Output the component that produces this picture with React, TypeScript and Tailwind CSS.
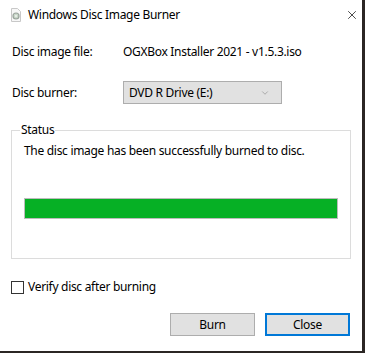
import { ChevronDown, X } from 'lucide-react';

function DiscIcon() {
  return (
    <svg width="14" height="14" viewBox="0 0 14 14" className="shrink-0">
      <path d="M2.5 0.5h6l3 3v10h-9z" fill="#f7f7f7" stroke="#c8c8c8" />
      <circle cx="7" cy="8" r="3.6" fill="#9aa39c" />
      <circle cx="7" cy="8" r="2.4" fill="#c9d8c9" />
      <circle cx="7" cy="8" r="0.9" fill="#f4f4f4" />
    </svg>
  );
}

export default function App() {
  return (
    <div className="h-[353px] w-[365px] bg-[#2b2624] font-['Segoe_UI','Noto_Sans',sans-serif] text-[12px] tracking-[-0.3px] text-black">
      <div className="flex h-[351px] w-[362px] flex-col bg-white">
        <div className="flex h-[30px] items-center pl-[9px] pr-[3px]">
          <DiscIcon />
          <span className="ml-[5px] flex-1 text-[12px]">Windows Disc Image Burner</span>
          <X className="h-[14px] w-[14px] text-black" strokeWidth={1.2} />
        </div>

        <div className="flex flex-col px-[12px] pt-[13px]">
          <div className="flex h-[18px] items-center">
            <span className="w-[111px]">Disc image file:</span>
            <span>OGXBox Installer 2021 - v1.5.3.iso</span>
          </div>

          <div className="mt-[20px] flex items-center">
            <span className="w-[111px]">Disc burner:</span>
            <div className="flex h-[23px] w-[159px] items-center border border-[#adadad] bg-[#e1e1e1] pl-[5px] pr-[11px]">
              <span className="flex-1">DVD R Drive (E:)</span>
              <ChevronDown className="h-[10px] w-[10px] text-[#7a7a7a]" strokeWidth={1.3} />
            </div>
          </div>
        </div>

        <fieldset className="mx-[11px] mt-[19px] h-[136px] border border-[#dcdcdc] px-[12px] pt-0">
          <legend className="ml-[-4px] px-[1px] leading-[14px]">Status</legend>
          <p className="mt-[5px]">The disc image has been successfully burned to disc.</p>
          <div className="mt-[38px] h-[21px] border border-[#bcbcbc] bg-[#e6e6e6]">
            <div className="h-full bg-[#06b025]" style={{ width: '100%' }} />
          </div>
        </fieldset>

        <label className="mx-[11px] mt-[19px] flex items-center">
          <span className="h-[13px] w-[13px] border border-[#333]" />
          <span className="ml-[4px]">Verify disc after burning</span>
        </label>

        <div className="mt-[17px] flex justify-end gap-[10px] pr-[12px]">
          <button className="h-[23px] w-[85px] border border-[#adadad] bg-[#e1e1e1]">Burn</button>
          <button className="h-[23px] w-[85px] border-2 border-[#0078d7] bg-[#e1e1e1]">Close</button>
        </div>
      </div>
    </div>
  );
}
